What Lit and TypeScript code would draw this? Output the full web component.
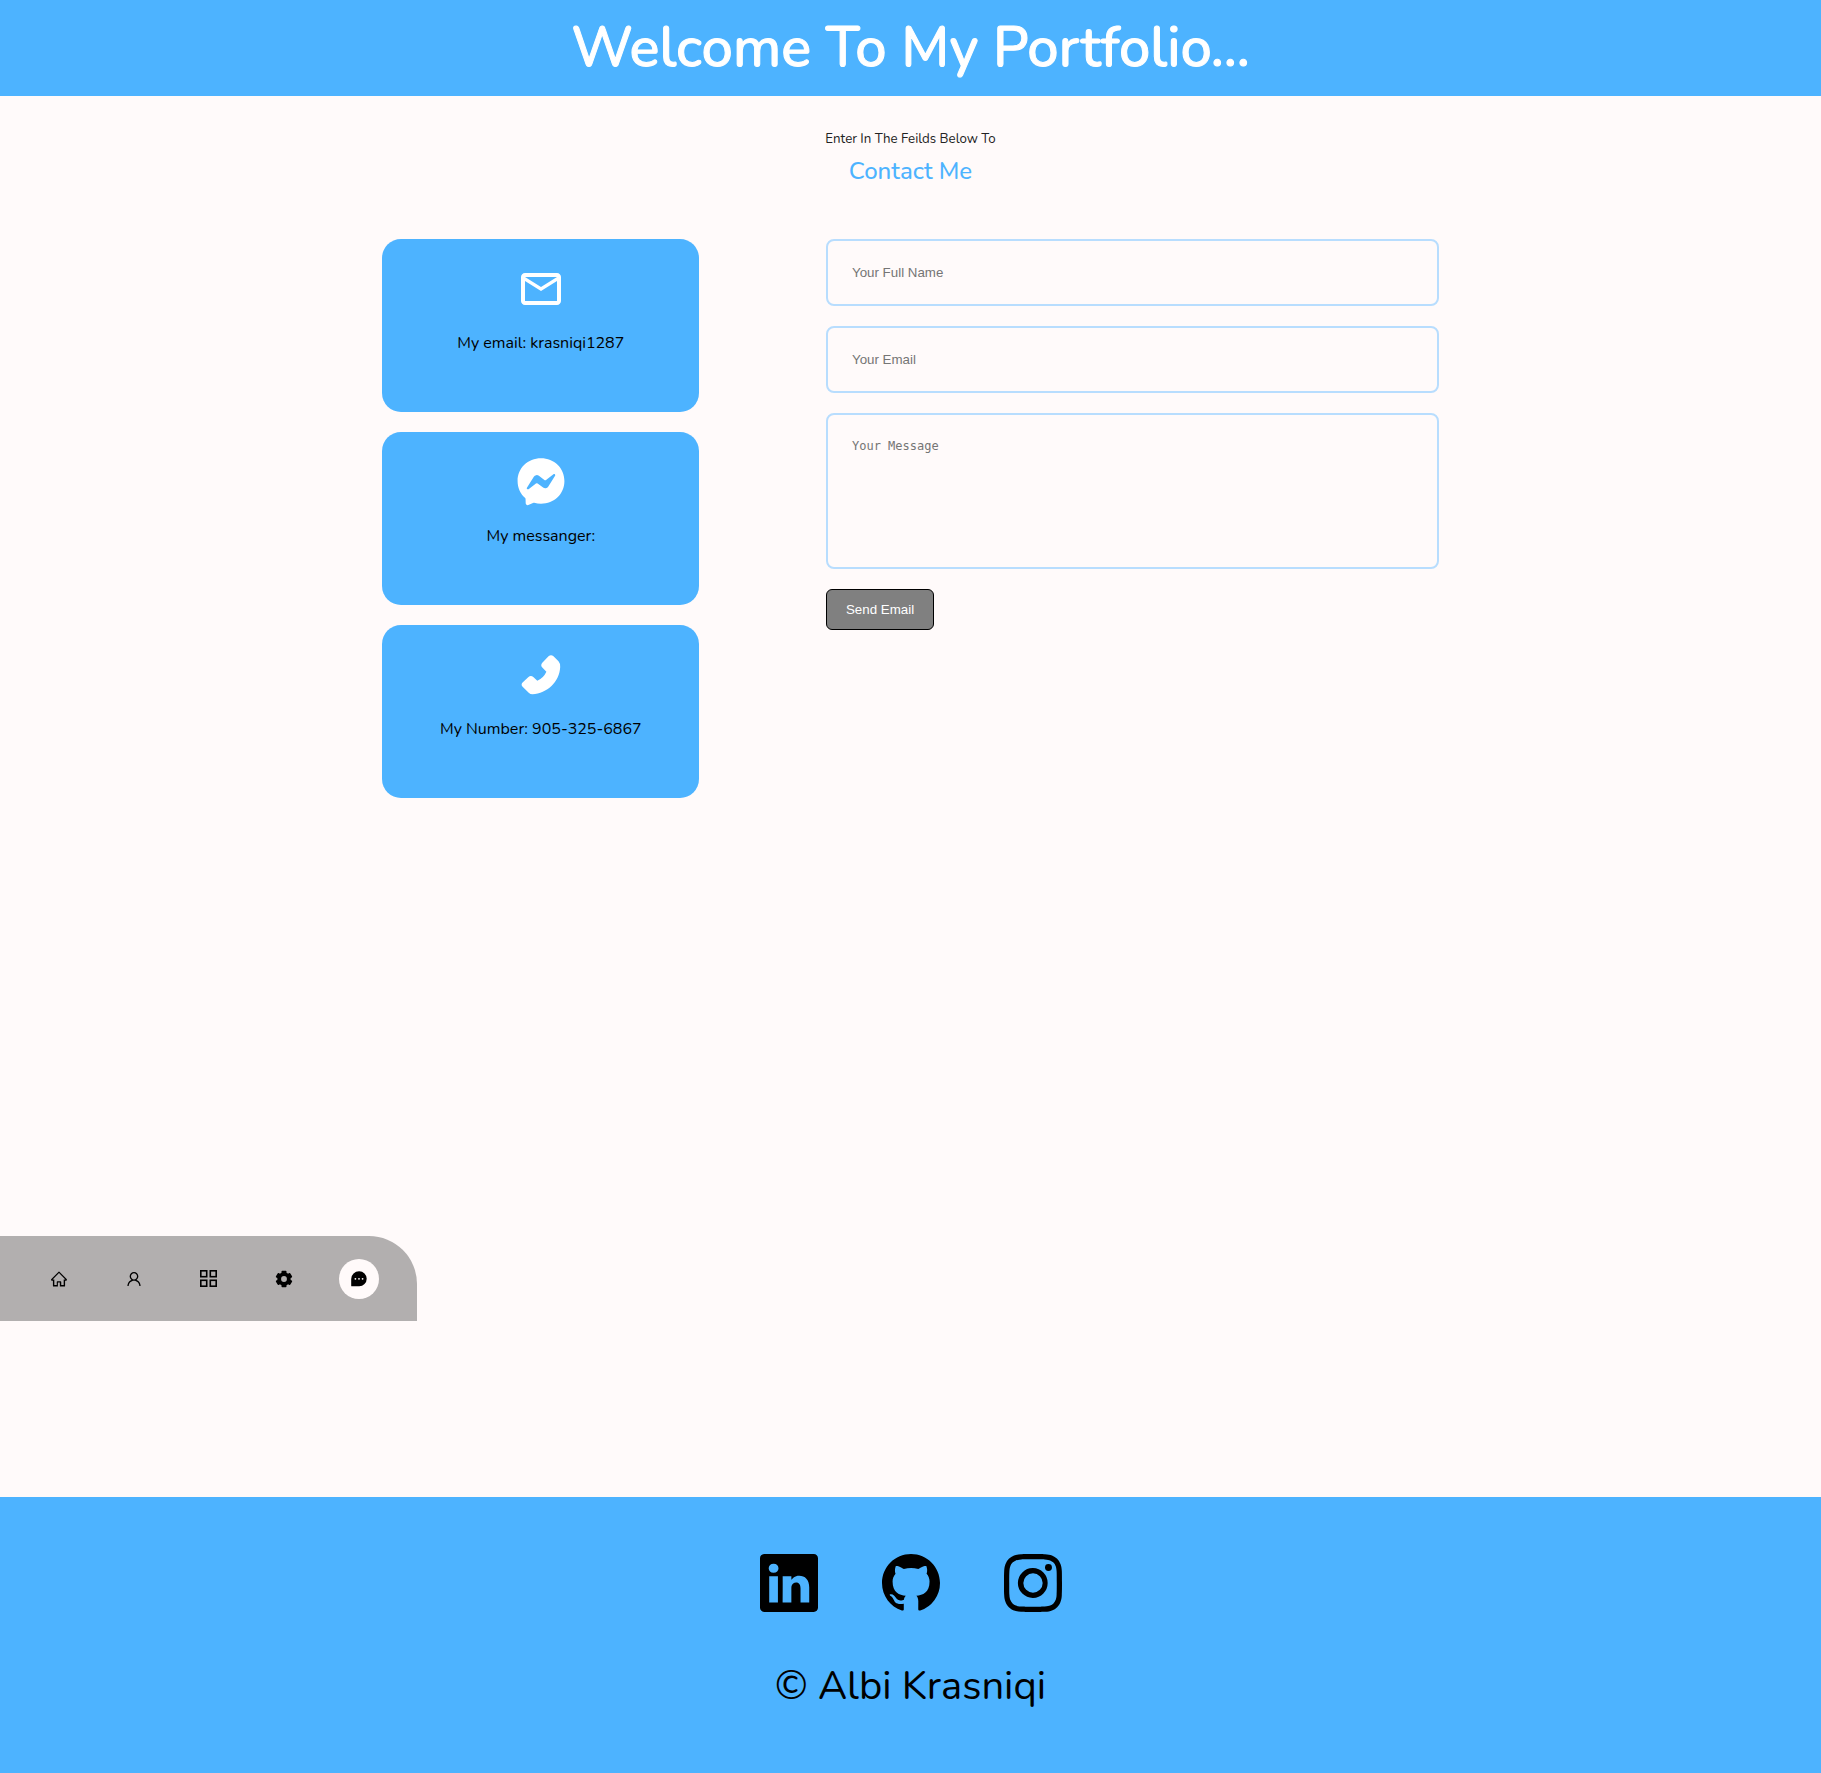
import { LitElement, html, css, svg } from "lit";
import { customElement } from "lit/decorators.js";

const icon = (viewBox: string, body: unknown) =>
  html`<svg class="icon" viewBox=${viewBox} fill="currentColor" aria-hidden="true">${body}</svg>`;

const mail = icon("0 0 24 24", svg`<path d="M22 6c0-1.1-.9-2-2-2H4c-1.1 0-2 .9-2 2v12c0 1.1.9 2 2 2h16c1.1 0 2-.9 2-2V6zm-2 0-8 5-8-5h16zm0 12H4V8l8 5 8-5v10z"/>`);
const messenger = icon("-.2 -.1 16.4 16.4", svg`<path d="M0 7.760C0 3.301 3.493 0 8 0s8 3.301 8 7.760-3.493 7.760-8 7.760c-.81 0-1.586-.107-2.316-.307a.639.639 0 0 0-.427.030l-1.588.702a.640.640 0 0 1-.898-.566l-.044-1.423a.639.639 0 0 0-.215-.456C.956 12.108 0 10.092 0 7.760zm5.546-1.459-2.350 3.728c-.225.358.214.761.551.506l2.525-1.916a.480.480 0 0 1 .578-.002l1.869 1.402a1.200 1.200 0 0 0 1.735-.320l2.350-3.728c.226-.358-.214-.761-.551-.506L9.728 7.381a.480.480 0 0 1-.578.002L7.281 5.980a1.200 1.200 0 0 0-1.735.320z"/>`);
const phone = icon("0 0 48 48", svg`<path d="M31.500 5.300Q34 3.200 36.500 5.300L41.500 10.300Q43.400 12.400 43.200 16C42.500 31 30 42.500 15.500 43.200Q13.300 43.200 11.700 41.700L5.600 35.800Q3.600 33.800 5.600 31.600L11.200 26.200Q13.800 23.800 16.300 26L20.300 29.700Q26.500 27 29.400 20.700L25.300 16.600Q23.200 14.300 25.300 11.700Z"/>`);

const home = icon("0 0 1024 1024", svg`<path d="M946.500 505L534.600 93.400a31.930 31.930 0 0 0-45.200 0L77.500 505c-12 12-18.800 28.300-18.800 45.300 0 35.300 28.700 64 64 64h43.400V908c0 17.700 14.300 32 32 32H448V716h112v224h265.900c17.700 0 32-14.300 32-32V614.300h43.400c17 0 33.300-6.700 45.300-18.800 24.900-25 24.900-65.500-.1-90.500zM778 860H640V676c0-17.700-14.300-32-32-32H416c-17.700 0-32 14.300-32 32v184H246V534.300H150L512 172l362.400 362.300H778V860z"/>`);
const user = icon("0 0 1024 1024", svg`<path d="M858.500 763.600a374 374 0 0 0-80.600-119.500 375.630 375.630 0 0 0-119.500-80.600c-.4-.2-.8-.3-1.200-.5C719.500 518 760 444.700 760 362c0-137-111-248-248-248S264 225 264 362c0 82.700 40.500 156 102.800 201.100-.4.2-.8.3-1.200.5-44.800 18.900-85 46-119.500 80.600a375.630 375.630 0 0 0-80.600 119.500A371.700 371.700 0 0 0 136 901.800a8 8 0 0 0 8 8.200h60c4.400 0 7.900-3.500 8-7.800 2-77.200 33-149.500 87.800-204.300 56.700-56.700 132-87.900 212.200-87.900s155.500 31.200 212.200 87.900C779 752.700 810 825 812 902.200c.1 4.400 3.600 7.800 8 7.800h60a8 8 0 0 0 8-8.200c-1-47.800-10.900-94.300-29.500-138.200zM512 534c-45.900 0-89.100-17.900-121.600-50.400S340 407.900 340 362c0-45.900 17.900-89.100 50.400-121.600S466.100 190 512 190s89.100 17.900 121.600 50.400S684 316.100 684 362c0 45.900-17.900 89.100-50.400 121.600S557.900 534 512 534z"/>`);
const grid = icon("0 0 20 20", svg`<g fill="none" stroke="currentColor" stroke-width="1.600"><rect x="1.800" y="1.800" width="5.900" height="5.900"/><rect x="11.300" y="1.800" width="5.900" height="5.900"/><rect x="1.800" y="11.300" width="5.900" height="5.900"/><rect x="11.300" y="11.300" width="5.900" height="5.900"/></g>`);
const gear = icon("0 0 24 24", svg`<path d="m2.344 15.271 2 3.460a1 1 0 0 0 1.366.365l1.396-.806c.58.457 1.221.832 1.895 1.112V21a1 1 0 0 0 1 1h4a1 1 0 0 0 1-1v-1.598a8.094 8.094 0 0 0 1.895-1.112l1.396.806c.477.275 1.091.110 1.366-.365l2-3.460a1.004 1.004 0 0 0-.365-1.366l-1.372-.793a7.683 7.683 0 0 0-.002-2.224l1.372-.793c.476-.275.641-.890.365-1.366l-2-3.460a1 1 0 0 0-1.366-.365l-1.396.806A8.034 8.034 0 0 0 15 4.598V3a1 1 0 0 0-1-1h-4a1 1 0 0 0-1 1v1.598A8.094 8.094 0 0 0 7.105 5.710L5.710 4.904a.999.999 0 0 0-1.366.365l-2 3.460a1.004 1.004 0 0 0 .365 1.366l1.372.793a7.683 7.683 0 0 0 0 2.224l-1.372.793c-.476.275-.641.890-.365 1.366zM12 8.500a3.500 3.500 0 1 1 0 7 3.500 3.500 0 0 1 0-7z"/>`);
const chat = icon("0 0 20 20", svg`<path fill-rule="evenodd" d="M10.200 2.300a7.500 7.500 0 1 1 0 15H2.700q-.5 0-.5-.5V10a7.900 7.700 0 0 1 8-7.700zM6.400 8.900a.9.900 0 1 0 0 1.800.9.900 0 0 0 0-1.800zm3.600 0a.9.900 0 1 0 0 1.800.9.900 0 0 0 0-1.800zm3.600 0a.9.900 0 1 0 0 1.800.9.900 0 0 0 0-1.800z"/>`);

const linkedin = icon("0 0 16 16", svg`<path d="M0 1.146C0 .513.526 0 1.175 0h13.650C15.474 0 16 .513 16 1.146v13.708c0 .633-.526 1.146-1.175 1.146H1.175C.526 16 0 15.487 0 14.854V1.146zm4.943 12.248V6.169H2.542v7.225h2.401zm-1.200-8.212c.837 0 1.358-.554 1.358-1.248-.015-.709-.520-1.248-1.342-1.248-.822 0-1.359.540-1.359 1.248 0 .694.521 1.248 1.327 1.248h.016zm4.908 8.212V9.359c0-.216.016-.432.080-.586.173-.431.568-.878 1.232-.878.869 0 1.216.662 1.216 1.634v3.865h2.401V9.250c0-2.220-1.184-3.252-2.764-3.252-1.274 0-1.845.700-2.165 1.193v.025h-.016a5.540 5.540 0 0 1 .016-.025V6.169h-2.400c.030.678 0 7.225 0 7.225h2.400z"/>`);
const github = icon("0 0 16 16", svg`<path d="M8 0C3.580 0 0 3.580 0 8c0 3.540 2.290 6.530 5.470 7.590.4.070.550-.170.550-.380 0-.190-.010-.820-.010-1.490-2.010.370-2.530-.490-2.690-.940-.090-.230-.480-.940-.820-1.130-.280-.150-.680-.520-.010-.530.630-.010 1.080.580 1.230.820.720 1.210 1.870.870 2.330.660.070-.520.280-.870.510-1.070-1.780-.200-3.640-.890-3.640-3.950 0-.870.310-1.590.820-2.150-.080-.200-.360-1.020.080-2.120 0 0 .670-.210 2.200.820.640-.180 1.320-.270 2-.270.680 0 1.360.090 2 .270 1.530-1.040 2.200-.820 2.200-.820.440 1.100.160 1.920.080 2.120.510.560.820 1.270.820 2.150 0 3.070-1.870 3.750-3.650 3.950.290.250.540.730.540 1.480 0 1.070-.010 1.930-.010 2.200 0 .210.150.460.550.380A8.012 8.012 0 0 0 16 8c0-4.420-3.580-8-8-8z"/>`);
const instagram = icon("0 0 16 16", svg`<path d="M8 0C5.829 0 5.556.010 4.703.048 3.850.088 3.269.222 2.760.420a3.917 3.917 0 0 0-1.417.923A3.927 3.927 0 0 0 .420 2.760C.222 3.268.087 3.850.048 4.700.010 5.555 0 5.827 0 8.001c0 2.172.010 2.444.048 3.297.040.852.174 1.433.372 1.942.205.526.478.972.923 1.417.444.445.890.719 1.416.923.510.198 1.090.333 1.942.372C5.555 15.990 5.827 16 8 16s2.444-.010 3.298-.048c.851-.040 1.434-.174 1.943-.372a3.916 3.916 0 0 0 1.416-.923c.445-.445.718-.891.923-1.417.197-.509.332-1.090.372-1.942C15.990 10.445 16 10.173 16 8s-.010-2.445-.048-3.299c-.040-.851-.175-1.433-.372-1.941a3.926 3.926 0 0 0-.923-1.417A3.911 3.911 0 0 0 13.240.420c-.510-.198-1.092-.333-1.943-.372C10.443.010 10.172 0 7.998 0h.003zm-.717 1.442h.718c2.136 0 2.389.007 3.232.046.780.035 1.204.166 1.486.275.373.145.640.319.920.599.280.280.453.546.598.920.110.281.240.705.275 1.485.039.843.047 1.096.047 3.231s-.008 2.389-.047 3.232c-.035.780-.166 1.203-.275 1.485a2.470 2.470 0 0 1-.599.919c-.280.280-.546.453-.920.598-.280.110-.704.240-1.485.276-.843.038-1.096.047-3.232.047s-2.390-.009-3.233-.047c-.780-.036-1.203-.166-1.485-.276a2.478 2.478 0 0 1-.920-.598 2.480 2.480 0 0 1-.600-.920c-.109-.281-.240-.705-.275-1.485-.038-.843-.046-1.096-.046-3.233 0-2.136.008-2.388.046-3.231.036-.780.166-1.204.276-1.486.145-.373.319-.640.599-.920.280-.280.546-.453.920-.598.282-.110.705-.240 1.485-.276.738-.034 1.024-.044 2.515-.045v.002zm4.988 1.328a.960.960 0 1 0 0 1.920.960.960 0 0 0 0-1.920zm-4.270 1.122a4.109 4.109 0 1 0 0 8.217 4.109 4.109 0 0 0 0-8.217zm0 1.441a2.667 2.667 0 1 1 0 5.334 2.667 2.667 0 0 1 0-5.334z"/>`);

const cards = [
  { icon: mail, text: "My email: krasniqi1287" },
  { icon: messenger, text: "My messanger:" },
  { icon: phone, text: "My Number: 905-325-6867" },
];

const links = [
  { label: "Home", href: "#home", icon: home, cls: "" },
  { label: "About", href: "#about", icon: user, cls: "" },
  { label: "Projects", href: "#projects", icon: grid, cls: "large" },
  { label: "Services", href: "#services", icon: gear, cls: "large" },
  { label: "Contact", href: "#contact", icon: chat, cls: "large active" },
];

const socials = [
  { label: "LinkedIn", icon: linkedin },
  { label: "GitHub", icon: github },
  { label: "Instagram", icon: instagram },
];

@customElement("app-root")
export class AppRoot extends LitElement {
  static styles = css`
    :host {
      display: flex;
      flex-direction: column;
      min-height: 100vh;
      background: #fffafa;
      color: #000;
      font-family: Nunito, Lato, sans-serif;
    }
    * { box-sizing: border-box; margin: 0; }
    .icon { display: block; width: 100%; height: 100%; }
    .banner {
      background: #4db3ff;
      color: #fff;
      padding: 12px 16px;
      text-align: center;
    }
    .title { font-size: 56px; line-height: 72px; font-weight: 500; -webkit-text-stroke: 1px #fff; }
    .contact {
      flex: 1;
      display: flex;
      flex-direction: column;
      padding: 32px 0 176px;
    }
    .intro { text-align: center; line-height: 22px; }
    .lead { font-weight: 400; color: #222; }
    .heading { color: #4db3ff; font-size: 24px; line-height: 42px; font-weight: 500; }
    .columns {
      width: 58%;
      margin: 47px auto 0;
      display: grid;
      grid-template-columns: 30% 58%;
      column-gap: 12%;
      align-items: start;
    }
    .cards, .form { display: flex; flex-direction: column; gap: 20px; }
    .card {
      display: flex;
      flex-direction: column;
      align-items: center;
      gap: 18px;
      padding: 26px 19px 57px;
      background: #4db3ff;
      border-radius: 19px;
      font-size: 16px;
      line-height: 24px;
    }
    .card-icon { width: 48px; height: 48px; color: #fff; }
    .form { align-items: flex-start; }
    .field {
      display: block;
      width: 100%;
      padding: 24px;
      border: 2px solid #b8ddfe;
      border-radius: 8px;
      background: transparent;
      font-family: "Liberation Sans", sans-serif;
      line-height: 15px;
      resize: none;
    }
    .message { height: 156px; font-family: "DejaVu Sans Mono", monospace; font-size: 12px; }
    .field::placeholder { color: #757575; opacity: 1; }
    .send {
      padding: 12px 19px;
      border: 1px solid #000;
      border-radius: 6px;
      background: #808080;
      color: #fff;
      font-family: "Liberation Sans", sans-serif;
      line-height: 15px;
      -webkit-font-smoothing: antialiased;
    }
    .dock {
      align-self: flex-start;
      display: flex;
      gap: 35px;
      margin-top: auto;
      padding: 23px 38px 22px 39px;
      background: #b2afaf;
      border-radius: 0 48px 0 0;
    }
    .dock-link {
      display: grid;
      place-items: center;
      width: 40px;
      height: 40px;
      border-radius: 50%;
      color: #000;
    }
    .active { background: #fffafa; }
    .glyph { width: 18px; height: 18px; }
    .large .glyph { width: 20px; height: 20px; }
    .footer {
      display: flex;
      flex-direction: column;
      align-items: center;
      gap: 50px;
      padding: 57px 16px 62px;
      background: #4db3ff;
    }
    .socials { display: flex; gap: 64px; }
    .social-link { width: 58px; height: 58px; color: #000; }
    .copyright { font-size: 40px; line-height: 49px; }
  `;

  render() {
    return html`
      <header class="banner"><h1 class="title">Welcome To My Portfolio...</h1></header>
      <main class="contact">
        <div class="intro">
          <h5 class="lead">Enter In The Feilds Below To</h5>
          <h2 class="heading">Contact Me</h2>
        </div>
        <div class="columns">
          <div class="cards">
            ${cards.map((c) => html`<article class="card"><span class="card-icon">${c.icon}</span><p>${c.text}</p></article>`)}
          </div>
          <form class="form" @submit=${(e: Event) => e.preventDefault()}>
            <input class="field" type="text" name="name" aria-label="Your Full Name" placeholder="Your Full Name" />
            <input class="field" type="email" name="email" aria-label="Your Email" placeholder="Your Email" />
            <textarea class="field message" name="message" aria-label="Your Message" placeholder="Your Message"></textarea>
            <button class="send" type="submit">Send Email</button>
          </form>
        </div>
        <nav class="dock" aria-label="Sections">
          ${links.map((l) => html`<a class="dock-link ${l.cls}" href=${l.href} aria-label=${l.label}><span class="glyph">${l.icon}</span></a>`)}
        </nav>
      </main>
      <footer class="footer">
        <div class="socials">
          ${socials.map((s) => html`<a class="social-link" href="#" aria-label=${s.label}>${s.icon}</a>`)}
        </div>
        <p class="copyright">© Albi Krasniqi</p>
      </footer>
    `;
  }
}
